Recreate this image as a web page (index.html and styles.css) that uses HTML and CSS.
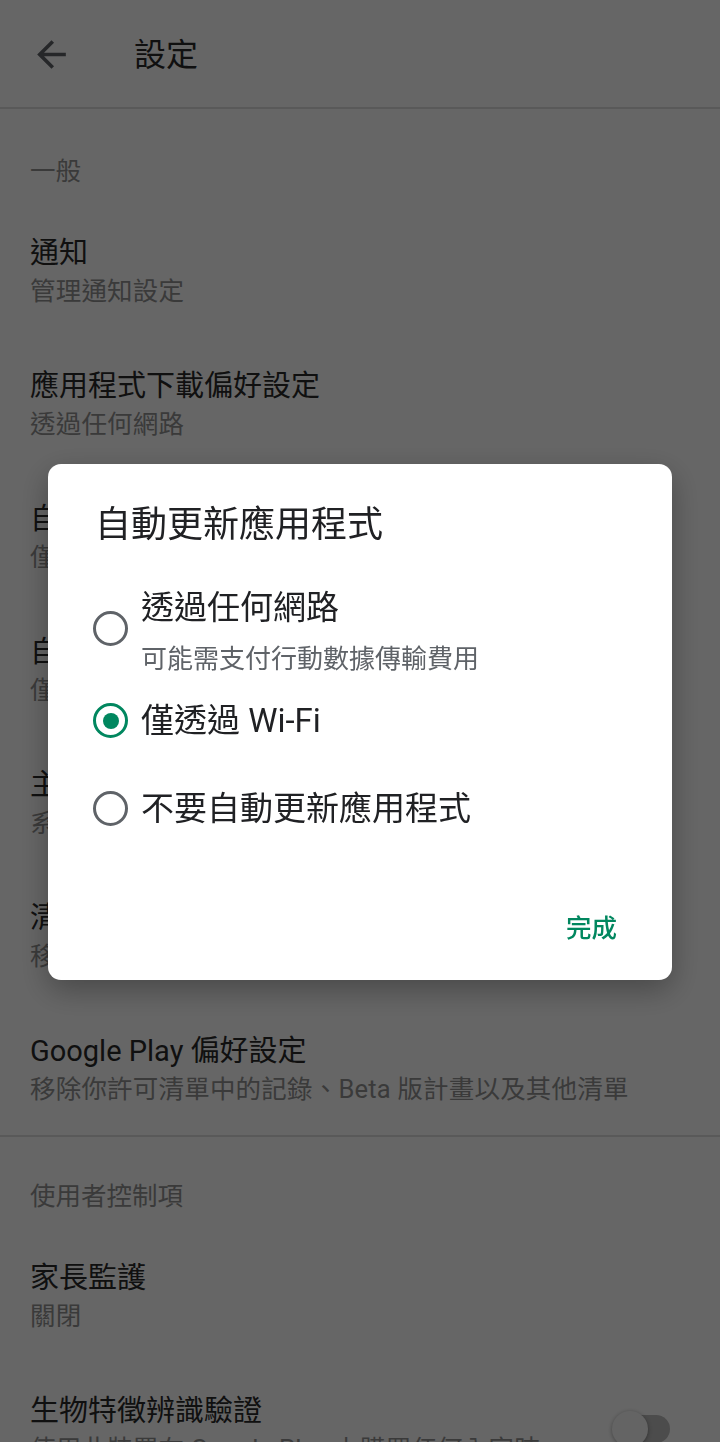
FILE: index.html
```html
<!DOCTYPE html>
<html lang="zh-Hant">
<head>
  <meta charset="UTF-8">
  <title>設定</title>
  <link rel="stylesheet" href="styles.css">
</head>
<body>

<div class="app-bar">
  <svg class="back" viewBox="0 0 24 24" width="43" height="43"><path d="M20 11H7.83l5.59-5.59L12 4l-8 8 8 8 1.41-1.41L7.83 13H20v-2z"/></svg>
  <h1>設定</h1>
</div>

<div class="section-title">一般</div>
<div class="row"><div class="row-text"><div class="title">通知</div><div class="sub">管理通知設定</div></div></div>
<div class="row"><div class="row-text"><div class="title">應用程式下載偏好設定</div><div class="sub">透過任何網路</div></div></div>
<div class="row"><div class="row-text"><div class="title">自動更新應用程式</div><div class="sub">僅透過 Wi-Fi</div></div></div>
<div class="row"><div class="row-text"><div class="title">自動將應用程式圖示新增至主畫面</div><div class="sub">僅限新的應用程式</div></div></div>
<div class="row"><div class="row-text"><div class="title">主題</div><div class="sub">系統預設</div></div></div>
<div class="row"><div class="row-text"><div class="title">清除裝置搜尋記錄</div><div class="sub">移除你在這部裝置上搜尋過的內容</div></div></div>
<div class="row"><div class="row-text"><div class="title">Google Play 偏好設定</div><div class="sub">移除你許可清單中的記錄、Beta 版計畫以及其他清單</div></div></div>

<div class="divider"></div>

<div class="section-title second">使用者控制項</div>
<div class="row"><div class="row-text"><div class="title">家長監護</div><div class="sub">關閉</div></div></div>
<div class="row">
  <div class="row-text"><div class="title">生物特徵辨識驗證</div><div class="sub">使用此裝置在 Google Play 上購買任何內容時</div></div>
  <div class="switch"><span class="thumb"></span></div>
</div>

<div class="scrim">
  <div class="dialog">
    <h2>自動更新應用程式</h2>
    <div class="options">
      <div class="option">
        <span class="radio"></span>
        <div class="option-text">
          <div class="option-title">透過任何網路</div>
          <div class="option-sub">可能需支付行動數據傳輸費用</div>
        </div>
      </div>
      <div class="option">
        <span class="radio checked"></span>
        <div class="option-text"><div class="option-title">僅透過 Wi-Fi</div></div>
      </div>
      <div class="option">
        <span class="radio"></span>
        <div class="option-text"><div class="option-title">不要自動更新應用程式</div></div>
      </div>
    </div>
    <div class="actions">
      <button type="button">完成</button>
    </div>
  </div>
</div>

</body>
</html>
```

FILE: styles.css
```css
body {
  margin: 0;
  background-color: #ffffff;
  font-family: Roboto, "Noto Sans CJK TC", sans-serif;
  overflow: hidden;
  height: 1442px;
}
.app-bar {
  display: flex;
  align-items: center;
  height: 107px;
  border-bottom: 2px solid #dedede;
}
.back {
  fill: #5f6368;
  margin-left: 30px;
  margin-top: 1px;
}
.app-bar h1 {
  margin: 2px 0 0 61px;
  font-size: 32px;
  font-weight: 400;
  color: #2a2a2a;
  line-height: 44px;
}
.section-title {
  padding: 43px 30px 14px;
  font-size: 25.5px;
  line-height: 38px;
  color: #929292;
}
.section-title.second {
  padding-top: 40px;
}
.row {
  display: flex;
  align-items: center;
  height: 133px;
  box-sizing: border-box;
  padding: 30px 50px 27px 30px;
}
.row-text {
  flex: 1;
  white-space: nowrap;
}
.title {
  font-size: 29px;
  line-height: 38px;
  color: #2a2a2a;
}
.sub {
  font-size: 25.5px;
  line-height: 38px;
  color: #929292;
  letter-spacing: 0.2px;
}
.divider {
  height: 2px;
  background: #dedede;
}
.switch {
  position: relative;
  width: 50px;
  height: 28px;
  border-radius: 14px;
  background: #bdbdbd;
  margin-bottom: 2px;
}
.thumb {
  position: absolute;
  left: -8px;
  top: -4px;
  width: 36px;
  height: 36px;
  border-radius: 50%;
  background: #fafafa;
  box-shadow: 0 1px 4px rgba(0, 0, 0, 0.35);
}
.scrim {
  position: fixed;
  left: 0;
  top: 0;
  width: 100%;
  height: 100%;
  background-color: rgba(0, 0, 0, 0.6);
  display: flex;
  align-items: center;
  justify-content: center;
}
.dialog {
  background: #fff;
  width: 624px;
  height: 516px;
  box-sizing: border-box;
  border-radius: 13px;
  padding: 37px 55px 34px 45px;
  box-shadow: 0 10px 30px rgba(0, 0, 0, 0.3);
  margin-top: 1px;
}
.dialog h2 {
  margin: 0 0 37px 2px;
  font-size: 36px;
  font-weight: 400;
  line-height: 48px;
  color: #202124;
}
.option {
  display: flex;
  align-items: center;
  min-height: 88px;
}
.option-title {
  font-size: 33px;
  line-height: 44px;
  color: #202124;
}
.option-sub {
  margin-top: 11px;
  font-size: 26px;
  line-height: 36px;
  color: #5f6368;
}
.radio {
  width: 35px;
  height: 35px;
  box-sizing: border-box;
  border: 3.5px solid #5f6368;
  border-radius: 50%;
  margin-right: 13px;
  margin-top: -5px;
  flex-shrink: 0;
  display: flex;
  align-items: center;
  justify-content: center;
}
.option:not(:first-child) .radio {
  margin-top: 0;
}
.radio.checked {
  border-color: #01875f;
}
.radio.checked::after {
  content: "";
  width: 16px;
  height: 16px;
  border-radius: 50%;
  background: #01875f;
}
.actions {
  display: flex;
  justify-content: flex-end;
  margin-top: 57px;
}
.actions button {
  background: none;
  border: none;
  padding: 0;
  font-family: inherit;
  font-size: 25.5px;
  font-weight: 500;
  line-height: 36px;
  color: #01875f;
}
```
